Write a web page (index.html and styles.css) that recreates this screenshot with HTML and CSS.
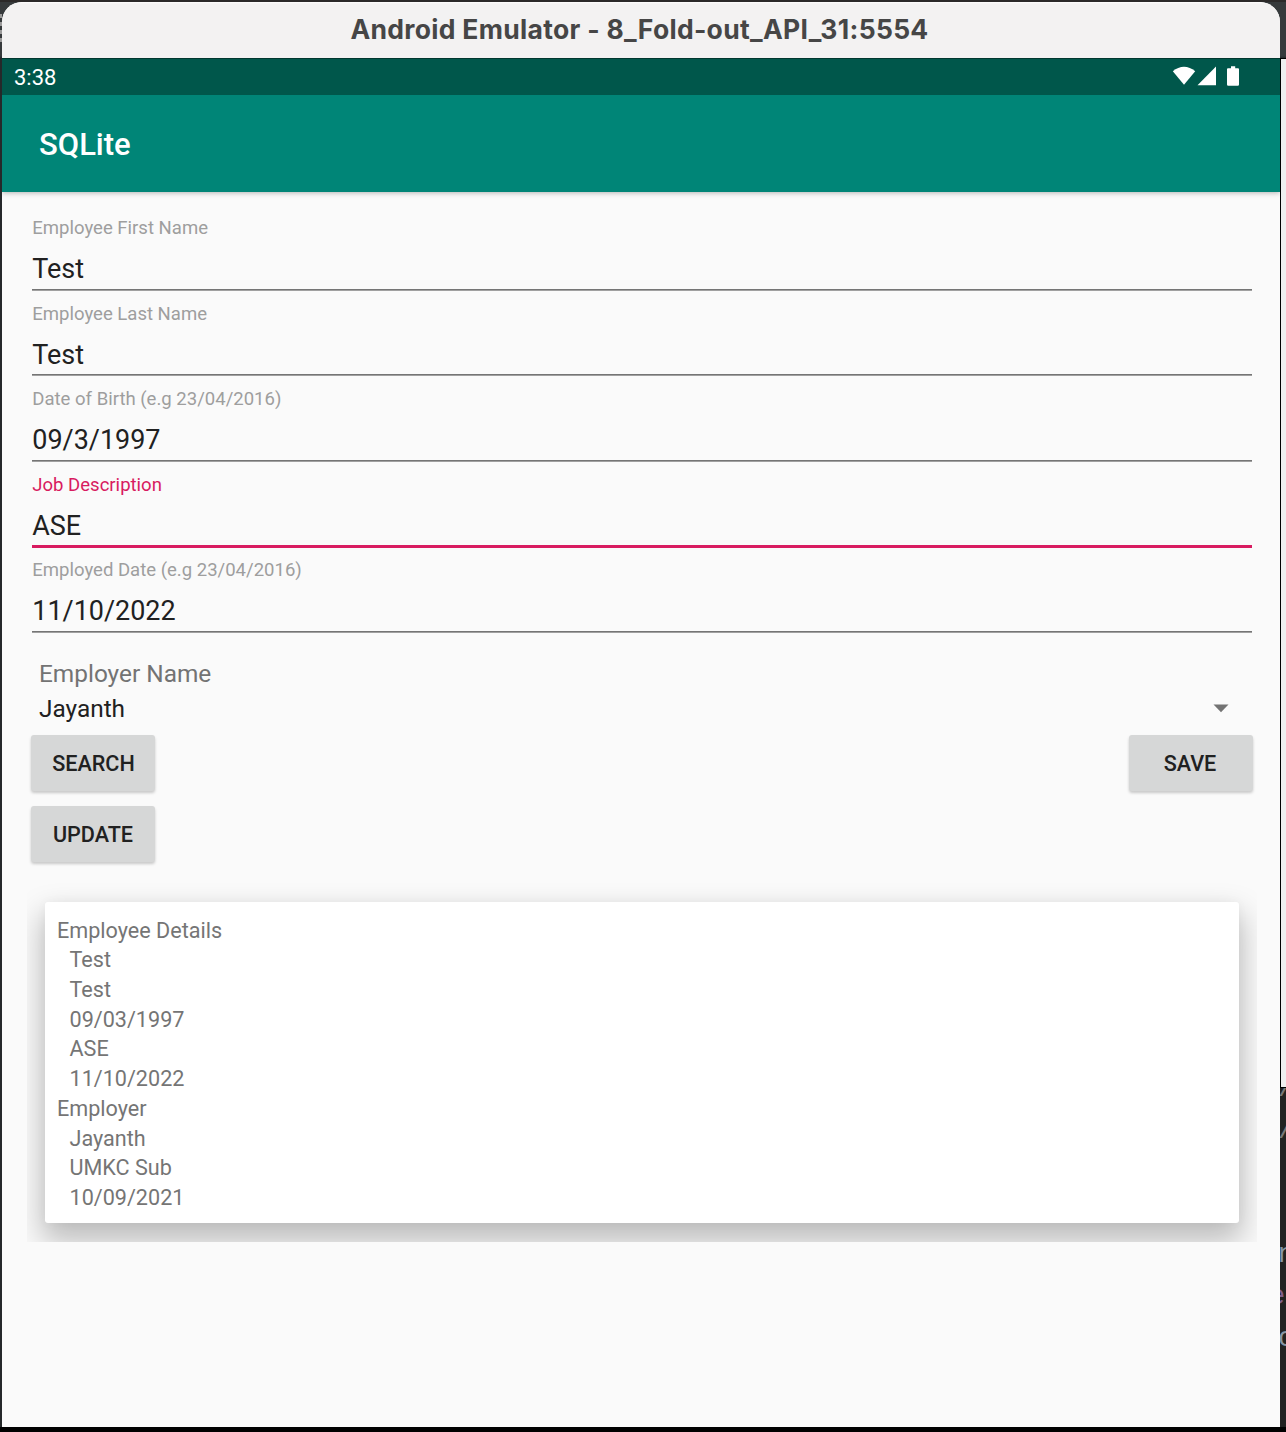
FILE: index.html
```html
<!DOCTYPE html>
<html lang="en">
<head>
<meta charset="utf-8">
<title>Android Emulator</title>
<link rel="stylesheet" href="styles.css">
</head>
<body>
<div class="desktop">
  <div class="edge-left"><i></i><i></i><i></i><i></i></div>
  <main class="window">
    <header class="titlebar"><span>Android Emulator - 8_Fold-out_API_31:5554</span></header>
    <div class="status">
      <span class="clock">3:38</span>
      <svg class="status-icons" width="68" height="22" viewBox="0 0 68 22" fill="#fff">
        <path d="M.8 5.3C7.8-.8 16.2-.8 23.2 5.3L12 18.7Z"/>
        <path d="M44 .5V19.3H25.5Z"/>
        <path d="M59 .2h4.2v2H66q1 0 1 1V18.6q0 1.2-1.2 1.2H56.2q-1.2 0-1.2-1.2V3.2q0-1 1-1h3Z"/>
      </svg>
    </div>
    <div class="toolbar"><h1>SQLite</h1></div>
    <section class="content">
      <form class="fields">
        <div class="field"><label>Employee First Name</label><div class="value">Test</div></div>
        <div class="field"><label>Employee Last Name</label><div class="value">Test</div></div>
        <div class="field"><label>Date of Birth (e.g 23/04/2016)</label><div class="value">09/3/1997</div></div>
        <div class="field focused"><label>Job Description</label><div class="value">ASE</div></div>
        <div class="field"><label>Employed Date (e.g 23/04/2016)</label><div class="value">11/10/2022</div></div>
      </form>
      <div class="employer">
        <div class="employer-label">Employer Name</div>
        <div class="spinner"><span>Jayanth</span><svg width="16" height="9" viewBox="0 0 16 9"><path d="M.5.5h15L8 8.2Z" fill="#737373"/></svg></div>
      </div>
      <div class="actions">
        <button class="btn search">SEARCH</button>
        <button class="btn save">SAVE</button>
        <button class="btn update">UPDATE</button>
      </div>
      <div class="card-clip">
        <div class="card">
          <p>Employee Details</p>
          <p class="sub">Test</p>
          <p class="sub">Test</p>
          <p class="sub">09/03/1997</p>
          <p class="sub">ASE</p>
          <p class="sub">11/10/2022</p>
          <p>Employer</p>
          <p class="sub">Jayanth</p>
          <p class="sub">UMKC Sub</p>
          <p class="sub">10/09/2021</p>
        </div>
      </div>
    </section>
  </main>
  <div class="edge-right">
    <div class="edge-top"></div>
    <div class="edge-panel"></div>
    <div class="edge-code"><span>/</span><span>/</span><span class="gap">n</span><span class="purple">e</span><span>c</span></div>
  </div>
</div>
</body>
</html>
```
FILE: styles.css
```css
* { box-sizing: border-box; }
body { margin: 0; background: #000; font-family: Roboto, "Liberation Sans", sans-serif; }
.desktop {
  display: grid;
  grid-template-columns: 2px 1278px 6px;
  height: 1432px;
  overflow: hidden;
  background: linear-gradient(#2b2929 2px, #363a3c 2px, #363a3c 56px, #25282a 58px, #25282a 1427px, #000 1427px);
}
.edge-left { padding-top: 14px; display: flex; flex-direction: column; gap: 4px; }
.edge-left i { height: 4px; background: #9a9a9a; }
.window {
  margin-top: 2px;
  height: 1425px;
  border-radius: 20px 20px 0 0;
  overflow: hidden;
  background: #fafafa;
  display: flex;
  flex-direction: column;
}
.titlebar {
  height: 56px;
  flex: none;
  display: flex;
  justify-content: center;
  background: linear-gradient(#fff, #f3f2f2 2px);
  color: #464646;
  font: 700 26.5px/54px Inter, sans-serif;
  letter-spacing: .3px;
  white-space: nowrap;
}
.titlebar span { margin-right: 3px; }
.status {
  height: 37px;
  flex: none;
  display: flex;
  justify-content: space-between;
  padding: 0 40px 0 12px;
  background: linear-gradient(#00372f 1px, #00574b 1px);
  color: #fff;
}
.clock { font-size: 22px; line-height: 39px; }
.status-icons { margin-top: 8px; }
.toolbar {
  height: 97px;
  flex: none;
  background: #008577;
  padding-left: 37px;
  box-shadow: 0 1px 5px rgba(0, 0, 0, .28);
  clip-path: inset(0 0 -8px 0);
  z-index: 1;
}
h1 { margin: 0; color: #fff; font-size: 31px; font-weight: 500; line-height: 99px; }
.content { padding: 13.5px 28px 0 30px; }
.field {
  height: 85.5px;
  padding-top: 10.5px;
  background: linear-gradient(#757575 1px, #a0a0a0 1px) bottom / 100% 2px no-repeat;
}
.field:nth-child(2) { background-position: 0 83px; }
.field label { display: block; padding-left: .3px; font-size: 18.55px; line-height: 24px; color: #9e9e9e; }
.value { padding-left: .3px; margin-top: 11px; font-size: 26.95px; line-height: 36px; color: #212121; }
.focused { background: linear-gradient(#d81b60, #d81b60) bottom / 100% 3px no-repeat; }
.focused label { color: #d81b60; }
.employer { padding: 24px 23px 0 7px; }
.employer-label { font-size: 24.4px; line-height: 34px; color: #737373; }
.spinner { display: flex; justify-content: space-between; align-items: center; height: 35px; font-size: 24.4px; color: #212121; }
.actions {
  display: grid;
  grid-template-columns: 124px 124px;
  justify-content: space-between;
  row-gap: 15px;
  margin: 9px -1px 0;
}
.btn {
  height: 56px;
  padding: 1px 0 0;
  border: 0;
  border-radius: 3px;
  background: #d6d7d7;
  box-shadow: 0 2px 3px rgba(0, 0, 0, .2);
  color: #212121;
  font: 500 21.6px/55px Roboto, sans-serif;
}
.search { padding-left: 1px; }
.save { padding-right: 2px; }
.card-clip { margin: 20px -5px 0 -5px; padding: 20px 18px 19px; overflow: hidden; }
.card {
  height: 321px;
  padding: 13.8px 12px 0;
  background: #fff;
  border-radius: 3px;
  box-shadow: 0 15px 30px 3px rgba(0, 0, 0, .25), 0 0 12px rgba(0, 0, 0, .03);
  color: #757575;
  font-size: 21.6px;
  line-height: 29.67px;
}
.card p { margin: 0; }
.card .sub { padding-left: 12.5px; }
.edge-right { display: flex; flex-direction: column; overflow: hidden; }
.edge-top { height: 58px; flex: none; }
.edge-panel { height: 1030px; flex: none; background: #efefef; border: solid #000; border-width: 1px 0 1px 1px; }
.edge-code {
  height: 339px;
  background: #222;
  overflow: hidden;
  font: 27px/42px "Liberation Mono", monospace;
  color: #8796a5;
  text-indent: -2px;
}
.edge-code span { display: block; }
.edge-code span:nth-child(-n+2) { color: #777; }
.edge-code span:first-child { margin-top: -20px; }
.edge-code .gap { margin-top: 82px; }
.edge-code .purple { color: #80608a; text-indent: -11px; }
```
